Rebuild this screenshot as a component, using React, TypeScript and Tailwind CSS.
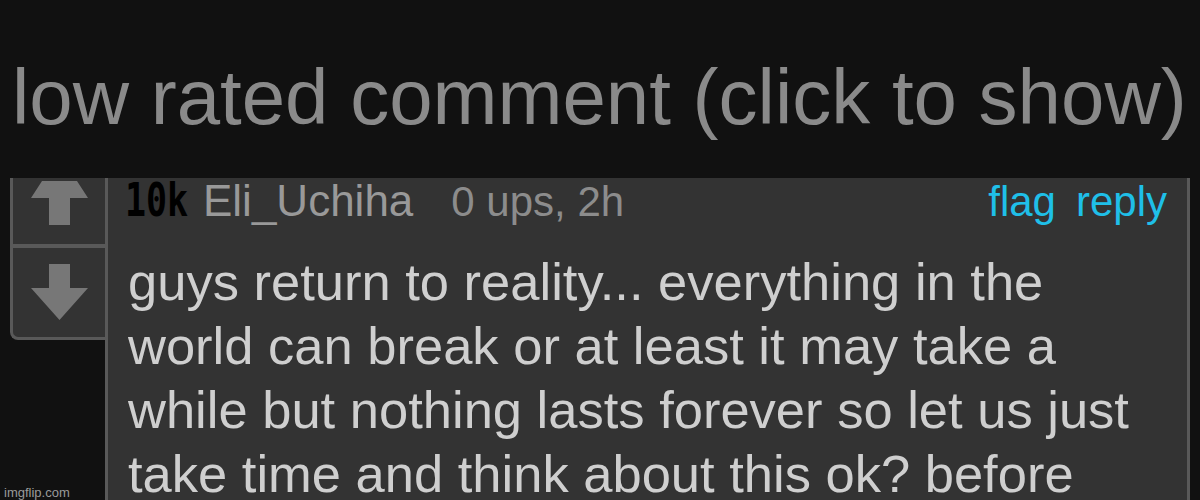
import React from "react";

const BORDER = "#595959";

function UpArrow() {
  // cell spans page x 13..105, y 178..244
  return (
    <svg width="92" height="66" viewBox="13 178 92 66" className="block">
      <polygon
        points="42,181 77,181 88,198 70,198 70,225 49,225 49,198 31,198"
        fill="#777777"
      />
    </svg>
  );
}

function DownArrow() {
  // cell spans page x 13..105, y 248..337
  return (
    <svg width="92" height="89" viewBox="13 248 92 89" className="block">
      <polygon
        points="49,264 70,264 70,288 88,288 59.5,320 31,288 49,288"
        fill="#777777"
      />
    </svg>
  );
}

const lines = [
  "guys return to reality... everything in the",
  "world can break or at least it may take a",
  "while but nothing lasts forever so let us just",
  "take time and think about this ok? before",
];

export default function App() {
  return (
    <div className="relative h-[500px] w-[1200px] overflow-hidden bg-[#111111] font-['Liberation_Sans',Arial,sans-serif]">
      <div className="h-[178px] pl-[12px] pt-[58px]">
        <span className="block whitespace-nowrap text-[78px] leading-none text-[#8a8a8a]">
          low rated comment (click to show)
        </span>
      </div>

      <div className="flex">
        <div className="ml-[10px] w-[95px] self-start overflow-hidden rounded-bl-[8px] border-b-[3px] border-l-[3px] border-[#595959] bg-[#333333]">
          <UpArrow />
          <div className="h-[4px] bg-[#595959]" />
          <DownArrow />
        </div>

        <div
          className="h-[322px] w-[1085px] border-x-[3px] bg-[#333333]"
          style={{ borderColor: BORDER }}
        >
          <div className="flex h-[44px] items-baseline pl-[17px] pr-[20px] text-[42px] leading-[44px]">
            <span className="inline-block w-[62px]">
              <span className="inline-block origin-left scale-x-[0.76] font-['DejaVu_Sans_Mono',monospace] text-[46px] font-bold text-black">
                10k
              </span>
            </span>
            <span className="ml-[16px] text-[44px] text-[#999999]">Eli_Uchiha</span>
            <span className="ml-[38px] text-[#8c8c8c]">0 ups, 2h</span>
            <span className="ml-auto text-[#1fbfe8]">flag</span>
            <span className="ml-[20px] text-[#1fbfe8]">reply</span>
          </div>
          <div className="mt-[28px] pl-[20px] text-[52.5px] leading-[64px] text-[#cfcfcf]">
            {lines.map((l) => (
              <div key={l} className="whitespace-nowrap">
                {l}
              </div>
            ))}
          </div>
        </div>
      </div>

      <span className="absolute bottom-[1px] left-[4px] text-[13px] leading-none text-[#9a9a9a]">
        imgflip.com
      </span>
    </div>
  );
}
